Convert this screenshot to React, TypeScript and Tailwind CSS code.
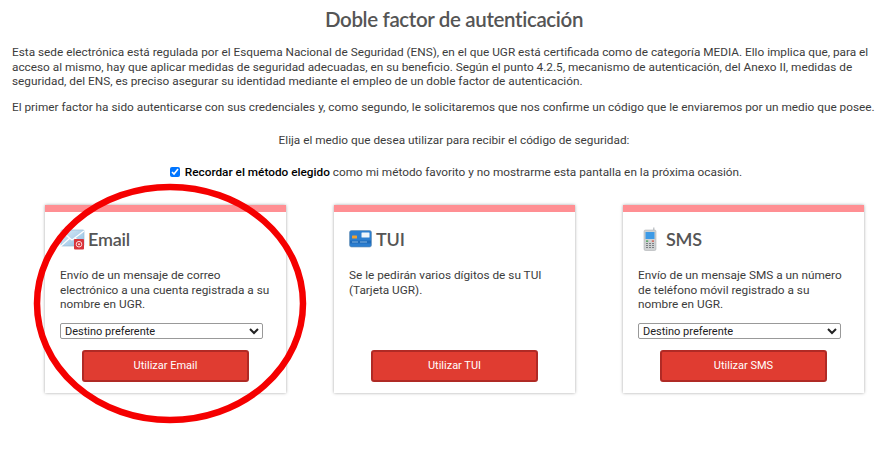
import React from 'react';

const CircleOverlay = () => (
  <svg className="absolute left-0 top-0 pointer-events-none" width="886" height="450" viewBox="0 0 886 450" fill="none">
    <ellipse cx="170" cy="303.500" rx="133" ry="116.500" stroke="#f50000" strokeWidth="6.500" />
  </svg>
);

const MailIcon = () => (
  <svg width="26" height="22" viewBox="0 0 26 22" className="shrink-0">
    <defs>
      <linearGradient id="mail" x1="0" y1="0" x2="1" y2="1">
        <stop offset="0" stopColor="#dcecf8" />
        <stop offset="1" stopColor="#8fbde2" />
      </linearGradient>
    </defs>
    <rect x="1" y="2" width="23" height="16" rx="1" fill="url(#mail)" stroke="#9cbcd6" strokeWidth="0.7" />
    <path d="M1 3 L12 12 L24 3 M1 18 L10 10 M24 18 L15 10" stroke="#fff" strokeWidth="1.2" fill="none" />
    <rect x="14" y="11" width="10" height="10.500" rx="1" fill="#d9333a" />
    <circle cx="19" cy="16.200" r="2.800" fill="none" stroke="#fbdcdc" strokeWidth="1" />
    <circle cx="19" cy="16.200" r="1" fill="#fbdcdc" />
  </svg>
);

const CardIcon = () => (
  <svg width="23" height="18" viewBox="0 0 23 18" className="shrink-0">
    <rect x="0.500" y="0.500" width="22" height="16.500" rx="2" fill="#2b7ed0" stroke="#6a8fb0" strokeWidth="0.6" />
    <rect x="1" y="10.500" width="21" height="3" fill="#1f6ab8" />
    <rect x="3" y="5.500" width="5" height="3" rx="0.500" fill="#f0a030" />
    <rect x="12.500" y="2.500" width="8" height="5" rx="0.500" fill="#eef5fb" />
    <path d="M3 12h6M11 12h7" stroke="#9cc8ee" strokeWidth="0.8" />
  </svg>
);

const PhoneIcon = () => (
  <svg width="14" height="24" viewBox="0 0 14 24" className="shrink-0 ml-[5px]">
    <rect x="10" y="0.500" width="1.500" height="4" fill="#c4c8cb" />
    <rect x="1" y="3" width="12" height="20.500" rx="1.500" fill="#cfd2d3" stroke="#a2a6a9" strokeWidth="0.5" />
    <rect x="2.500" y="5" width="9" height="7" fill="#3d9ae6" />
    <rect x="3" y="13.500" width="2.200" height="1.200" fill="#3c9a48" />
    <rect x="8.800" y="13.500" width="2.200" height="1.200" fill="#d24a3c" />
    <path d="M3 16.500h8M3 18.500h8M3 20.500h8" stroke="#7b8084" strokeWidth="1" strokeDasharray="2 1" />
  </svg>
);

const methods = [
  {
    key: 'email',
    title: 'Email',
    icon: <MailIcon />,
    gap: 'gap-[2px]',
    text: 'Envío de un mensaje de correo electrónico a una cuenta registrada a su nombre en UGR.',
    select: true,
    button: 'Utilizar Email',
  },
  {
    key: 'tui',
    title: 'TUI',
    icon: <CardIcon />,
    gap: 'gap-[4px]',
    text: 'Se le pedirán varios dígitos de su TUI (Tarjeta UGR).',
    select: false,
    button: 'Utilizar TUI',
  },
  {
    key: 'sms',
    title: 'SMS',
    icon: <PhoneIcon />,
    gap: 'gap-[9px]',
    text: 'Envío de un mensaje SMS a un número de teléfono móvil registrado a su nombre en UGR.',
    select: true,
    button: 'Utilizar SMS',
  },
];

export default function App() {
  return (
    <div className="relative w-[886px] h-[450px] overflow-hidden bg-white text-[#3c3c3c] font-['Roboto',sans-serif] text-[11.8px] leading-[14.5px]">
      {/* the page is wider than the window, so centred lines sit right of the middle */}
      <div className="w-[908px]">
        <h1 className="pt-[7px] text-center font-['Lato',sans-serif] text-[20.5px] tracking-[-0.35px] leading-[24px] font-semibold text-[#555]">
          Doble factor de autenticación
        </h1>

        <div className="pl-[12px] pt-[14px]">
          <p className="w-[866px]">
            Esta sede electrónica está regulada por el Esquema Nacional de Seguridad (ENS), en el que UGR está certificada como de categoría MEDIA. Ello implica que, para el acceso al mismo, hay que aplicar medidas de seguridad adecuadas, en su beneficio. Según el punto 4.2.5, mecanismo de autenticación, del Anexo II, medidas de seguridad, del ENS, es preciso asegurar su identidad mediante el empleo de un doble factor de autenticación.
          </p>
          <p className="mt-[11px] whitespace-nowrap">
            El primer factor ha sido autenticarse con sus credenciales y, como segundo, le solicitaremos que nos confirme un código que le enviaremos por un medio que posee.
          </p>
          <p className="mt-[19px] pr-[12px] text-center">Elija el medio que desea utilizar para recibir el código de seguridad:</p>
          <label className="mt-[17px] pr-[8px] flex items-center justify-center gap-[5px]">
            <input type="checkbox" defaultChecked className="w-[10px] h-[10px] accent-[#0075ff]" />
            <span>
              <b className="font-medium text-black">Recordar el método elegido</b> como mi método favorito y no mostrarme esta pantalla en la próxima ocasión.
            </span>
          </label>
        </div>
      </div>

      <div className="mt-[26px] pl-[45px] flex gap-[48px]">
        {methods.map((m) => (
          <div key={m.key} className="w-[241px] h-[188px] flex flex-col bg-white border-t-[7px] border-[#ff8f93] shadow-[0_0_3px_rgba(0,0,0,0.35)] px-[15px]">
            <div className={`flex items-center ${m.gap} h-[24px] mt-[15px]`}>
              {m.icon}
              <h2 className="font-['Lato',sans-serif] text-[18px] font-semibold tracking-[-0.2px] text-[#555]">{m.title}</h2>
            </div>
            <p className="mt-[17px] h-[44px] w-[214px]">{m.text}</p>
            {m.select && (
              <select className="mt-[11px] w-[203px] h-[16px] border border-[#999] rounded-[2px] bg-white text-[11px] leading-[14px] text-[#222] font-['Roboto',sans-serif]">
                <option>Destino preferente</option>
              </select>
            )}
            <button className="mt-auto mb-[11px] mx-auto w-[167px] h-[32px] rounded-[3px] bg-[#e03c31] border-2 border-[#b02a25] text-white text-[11px] font-['Roboto',sans-serif]">
              {m.button}
            </button>
          </div>
        ))}
      </div>

      <CircleOverlay />
    </div>
  );
}
